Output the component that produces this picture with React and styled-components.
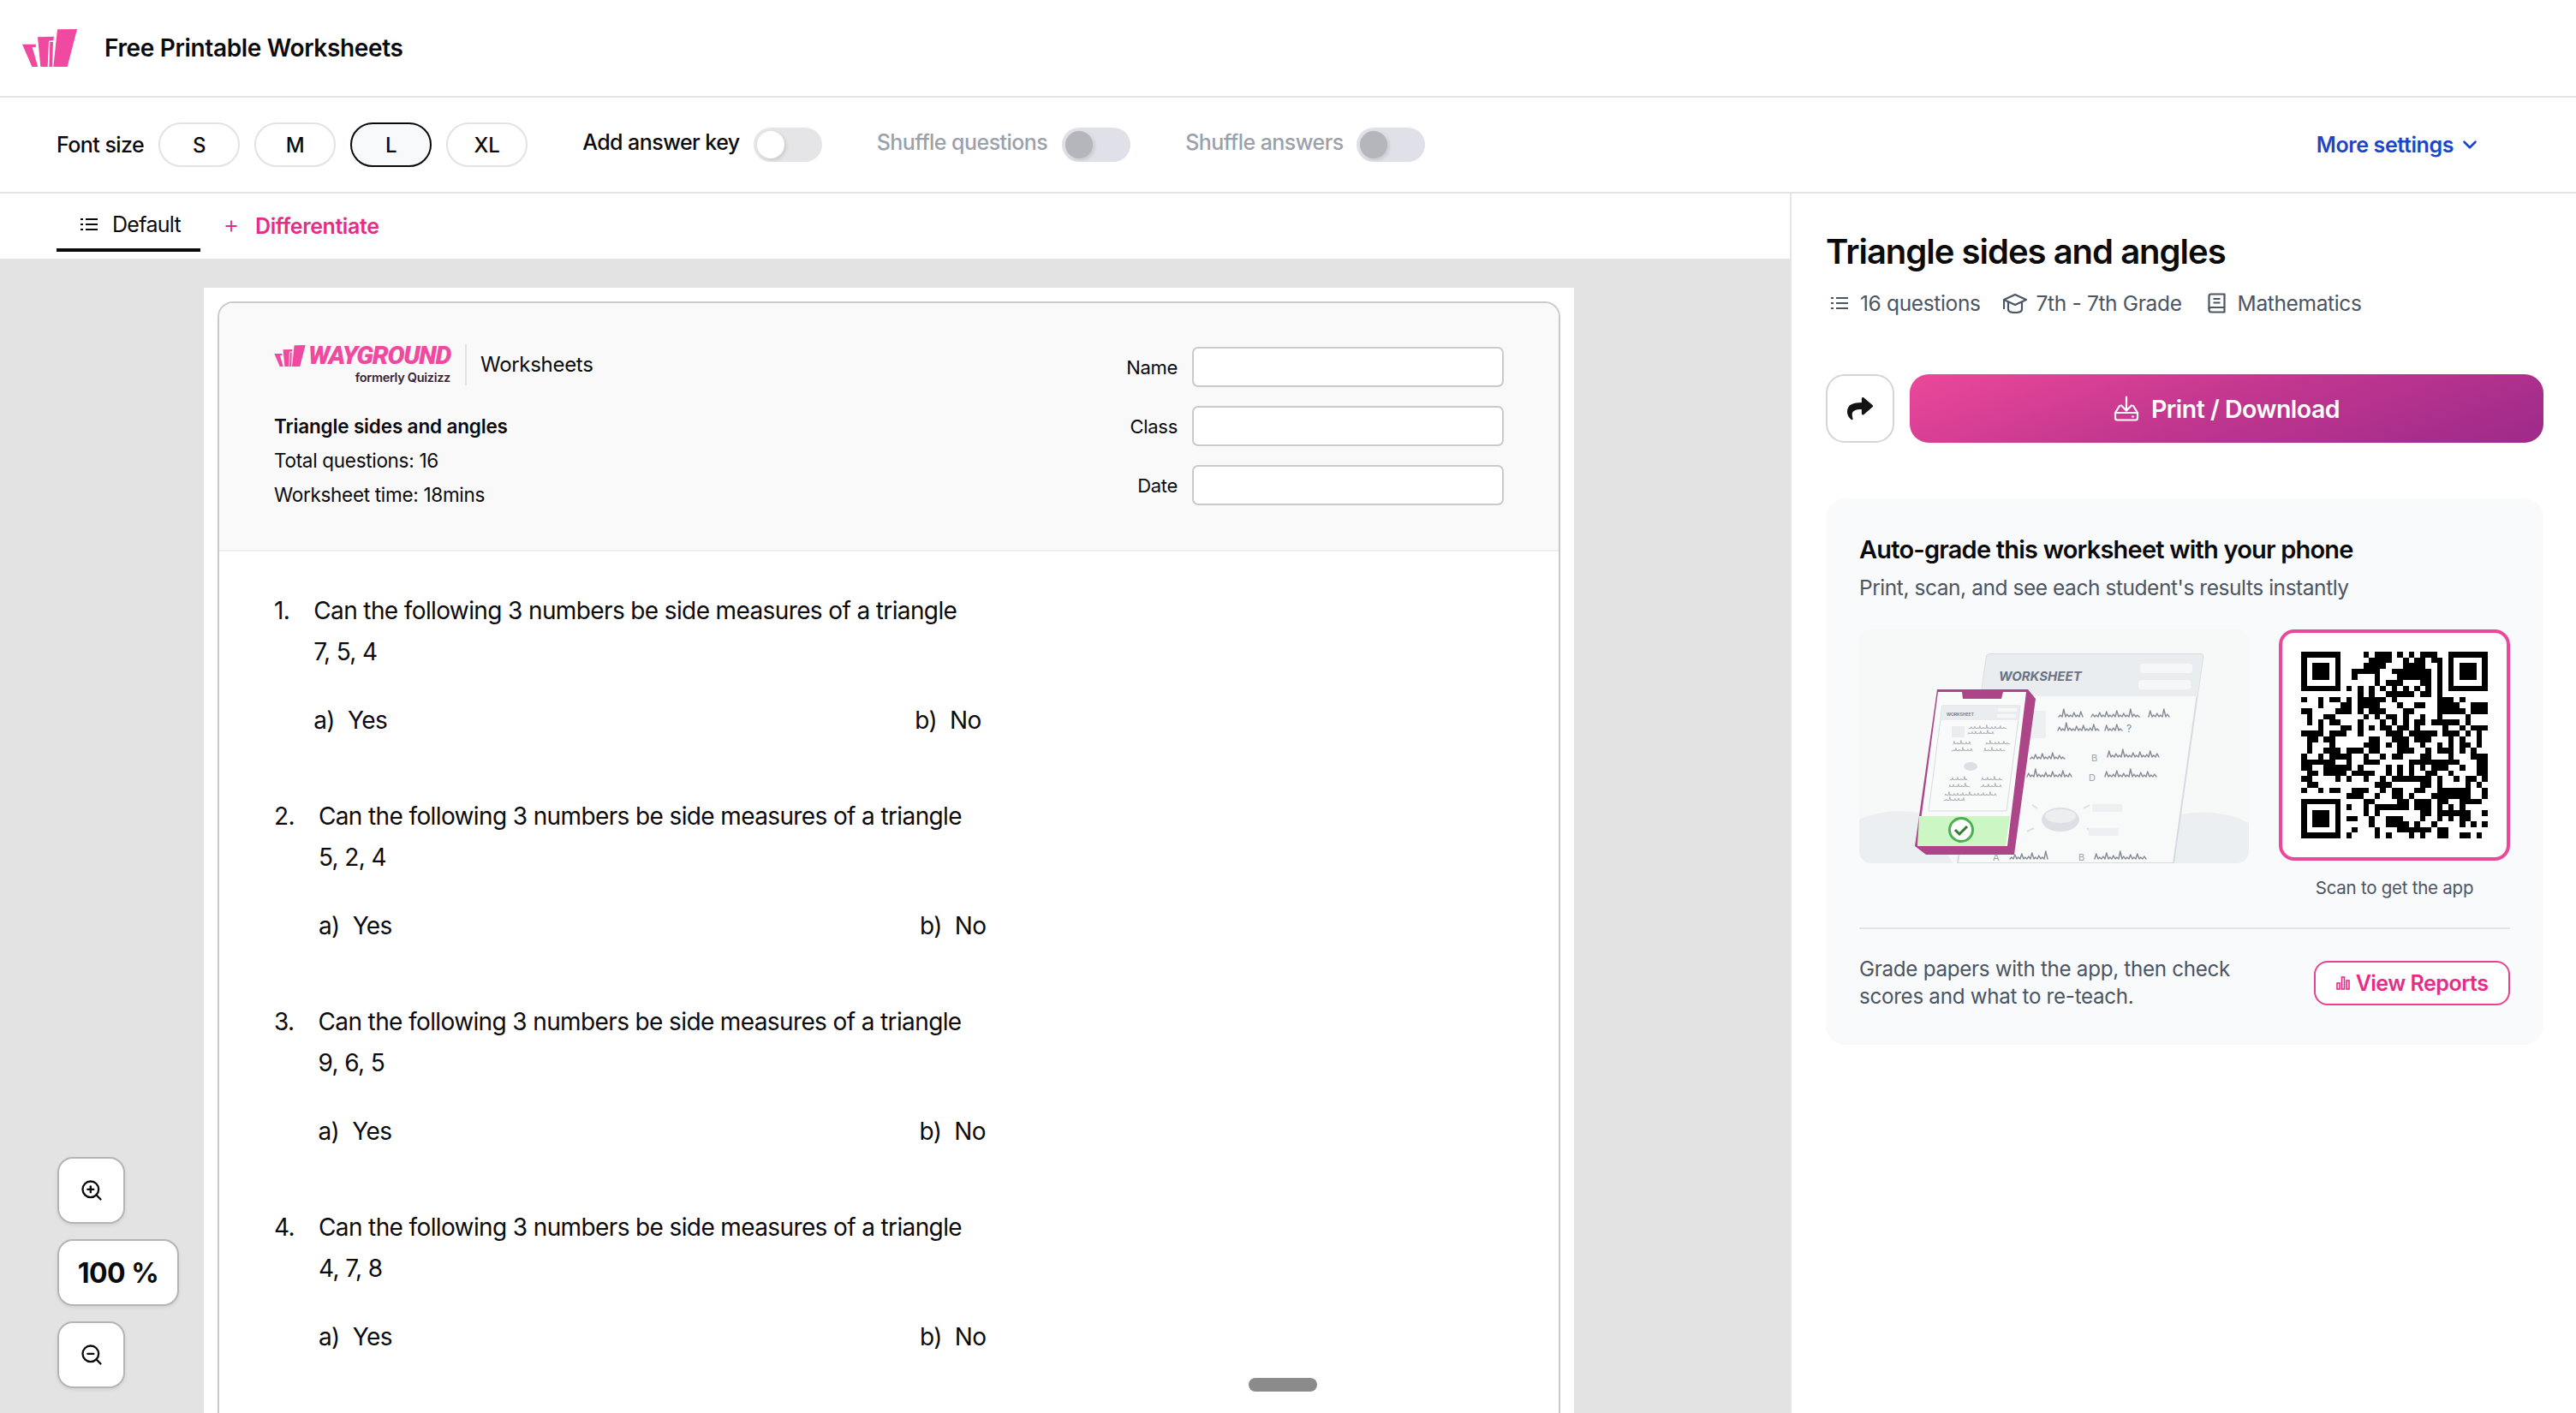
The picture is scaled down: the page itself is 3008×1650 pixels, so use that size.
import styled, { createGlobalStyle } from 'styled-components'
import { ChevronDown, Plus, ZoomIn, ZoomOut } from 'lucide-react'
import { FaShare } from 'react-icons/fa'

const GlobalStyle = createGlobalStyle`
  html, body {
    margin: 0;
    padding: 0;
    background: #fff;
  }
  * {
    box-sizing: border-box;
  }
  body {
    font-family: Inter, "Noto Sans", sans-serif;
    color: #0b0b0d;
  }
`

const Page = styled.div`
  width: 3008px;
  height: 1650px;
  overflow: hidden;
  display: flex;
  flex-direction: column;
  background: #fff;
`

const TopBar = styled.header`
  height: 114px;
  flex: none;
  display: flex;
  align-items: center;
  gap: 32px;
  padding-left: 26px;
  border-bottom: 2px solid #e2e2e8;
`

const TopTitle = styled.h1`
  margin: 0;
  font-size: 28px;
  font-weight: 600;
  letter-spacing: -0.35px;
`

const Toolbar = styled.div`
  height: 112px;
  flex: none;
  display: flex;
  align-items: center;
  padding: 0 111px 0 66px;
  border-bottom: 2px solid #e2e2e8;
`

const ToolLabel = styled.span`
  font-size: 25px;
  font-weight: 500;
  letter-spacing: -0.55px;
  margin-right: ${p => p.$gap || 17}px;
  margin-top: ${p => p.$lift ? -6 : 0}px;
  color: ${p => p.$muted ? '#9ca1a9' : '#0b0b0d'};
`

const SizeGroup = styled.div`
  display: flex;
  gap: 17px;
  margin-right: 64px;
`

const SizeButton = styled.button`
  width: 95px;
  height: 52px;
  border-radius: 26px;
  font: 500 24px Inter, sans-serif;
  color: #0b0b0d;
  background: ${p => p.$active ? '#f8f9fb' : '#fff'};
  border: 2px solid ${p => p.$active ? '#0b0b0d' : '#e2e2e8'};
`

const Toggle = styled.span`
  position: relative;
  width: 80px;
  height: 40px;
  flex: none;
  border-radius: 20px;
  margin-right: ${p => p.$gap || 64}px;
  background: ${p => p.$disabled ? '#e0e1e8' : '#e5e5e7'};

  &::after {
    content: '';
    position: absolute;
    left: 4px;
    top: 4px;
    width: 32px;
    height: 32px;
    border-radius: 50%;
    background: ${p => p.$disabled ? '#b4b6bb' : '#fff'};
    box-shadow: 2px 2px 4px rgba(0, 0, 0, 0.12);
  }
`

const MoreLink = styled.a`
  margin-left: auto;
  display: flex;
  align-items: center;
  gap: 6px;
  font-size: 25px;
  font-weight: 600;
  letter-spacing: -0.4px;
  color: #1d45c9;
`

const Body = styled.div`
  flex: 1;
  min-height: 0;
  display: flex;
`

const LeftPane = styled.main`
  width: 2090px;
  flex: none;
  display: flex;
  flex-direction: column;
`

const Tabs = styled.nav`
  height: 76px;
  flex: none;
  display: flex;
  padding-left: 66px;
`

const Tab = styled.div`
  width: 168px;
  height: 68px;
  display: flex;
  align-items: center;
  padding: 7px 0 0 28px;
  gap: 17px;
  font-size: 25px;
  letter-spacing: -0.7px;
  border-bottom: 4px solid #0b0b0d;
`

const TabAction = styled.div`
  display: flex;
  align-items: center;
  height: 76px;
  gap: 18px;
  margin-left: 26px;
  font-size: 25px;
  font-weight: 600;
  letter-spacing: -0.4px;
  color: #e52d87;
`

const Canvas = styled.div`
  position: relative;
  flex: 1;
  min-height: 0;
  overflow: hidden;
  padding: 34px 0 0 238px;
  background: #e3e3e4;
`

const Paper = styled.div`
  width: 1600px;
  height: 1400px;
  padding: 16px 16px 0;
  background: #fff;
`

const Sheet = styled.div`
  height: 100%;
  border: 2px solid #cacaca;
  border-bottom: 0;
  border-radius: 18px 18px 0 0;
`

const SheetHead = styled.div`
  height: 290px;
  display: flex;
  justify-content: space-between;
  padding: 48px 64px 0;
  background: #f9f9f9;
  border-bottom: 2px solid #eeeeee;
  border-radius: 16px 16px 0 0;
`

const Brand = styled.div`
  display: flex;
  align-items: center;
  height: 48px;
`

const BrandLogo = styled.div`
  width: 206px;
  display: flex;
  flex-direction: column;
  align-items: flex-end;
`

const BrandRow = styled.div`
  width: 100%;
  height: 26px;
  display: flex;
  align-items: flex-end;
  justify-content: space-between;

  svg {
    flex: none;
  }
`

const BrandName = styled.span`
  font-family: Roboto, sans-serif;
  font-size: 30px;
  font-weight: 900;
  font-style: italic;
  line-height: 26px;
  letter-spacing: -1.3px;
  white-space: nowrap;
  color: #ef4a9f;
`

const BrandNote = styled.span`
  margin-top: 4px;
  font-size: 14.5px;
  line-height: 18px;
  font-weight: 600;
  letter-spacing: -0.3px;
  color: #3a1f35;
`

const BrandKind = styled.span`
  margin-left: 17px;
  padding-left: 16px;
  height: 48px;
  line-height: 48px;
  border-left: 2px solid #e2e2e2;
  font-size: 24px;
  letter-spacing: -0.3px;
`

const SheetInfo = styled.div`
  margin-top: 28px;
  font-size: 22.5px;
  line-height: 40px;
  letter-spacing: -0.3px;
`

const InfoTitle = styled.div`
  font-weight: 600;
  letter-spacing: -0.15px;
`

const NameFields = styled.div`
  margin-top: 3px;
  display: flex;
  flex-direction: column;
  gap: 22px;
`

const FieldRow = styled.label`
  display: flex;
  align-items: center;
  justify-content: flex-end;
  gap: 17px;
  font-size: 22px;
  letter-spacing: -0.3px;
`

const FieldBox = styled.span`
  width: 364px;
  height: 47px;
  background: #fff;
  border: 2px solid #cacaca;
  border-radius: 7px;
`

const Questions = styled.div`
  padding: 45px 64px 0;
`

const Question = styled.section`
  margin-bottom: 64px;
  display: flex;
  gap: 28px;
  font-size: 28px;
  line-height: 48px;
  letter-spacing: -0.62px;
`

const QuestionBody = styled.div`
  flex: 1;
`

const Options = styled.div`
  margin-top: 32px;
  display: grid;
  grid-template-columns: 702px 700px;
`

const Option = styled.div`
  display: flex;
  gap: 15px;
`

const ZoomControls = styled.div`
  position: absolute;
  left: 67px;
  top: 1049px;
  display: flex;
  flex-direction: column;
  align-items: flex-start;
  gap: 18px;
`

const ZoomButton = styled.button`
  width: ${p => p.$wide ? 142 : 79}px;
  height: 78px;
  display: flex;
  align-items: center;
  justify-content: center;
  padding: 0;
  background: #fff;
  border: 2px solid #b5b5b5;
  border-radius: 18px;
  box-shadow: 0 2px 4px rgba(0, 0, 0, 0.08);
  font: 700 32px Inter, sans-serif;
  letter-spacing: -0.5px;
  color: #0b0b0d;
`

const ScrollHandle = styled.div`
  position: absolute;
  left: 1458px;
  top: 1307px;
  width: 80px;
  height: 16px;
  border-radius: 8px;
  background: #8b8b8b;
`

const RightPane = styled.aside`
  flex: 1;
  padding: 44px 38px 0 40px;
  border-left: 2px solid #e5e5ea;
`

const DocTitle = styled.h2`
  margin: 0;
  font-size: 40px;
  line-height: 48px;
  font-weight: 600;
  letter-spacing: -1px;
`

const MetaRow = styled.div`
  margin-top: 21px;
  height: 30px;
  display: flex;
  align-items: center;
  padding-left: 6px;
  font-size: 24.5px;
  letter-spacing: -0.35px;
  color: #4b5563;
`

const MetaItem = styled.span`
  display: flex;
  align-items: center;
  gap: ${p => p.$gap || 14}px;
  margin-right: ${p => p.$after || 25}px;
`

const Actions = styled.div`
  margin-top: 68px;
  display: flex;
  gap: 18px;
`

const ShareButton = styled.button`
  width: 80px;
  height: 80px;
  flex: none;
  display: flex;
  align-items: center;
  justify-content: center;
  padding: 0;
  background: #fff;
  border: 2px solid #d3d5da;
  border-radius: 22px;
  color: #111315;
`

const PrintButton = styled.button`
  flex: 1;
  display: flex;
  align-items: center;
  justify-content: center;
  gap: 14px;
  border: 0;
  border-radius: 22px;
  background: linear-gradient(160deg, #ec4899 0%, #c0368f 50%, #9d2a8a 100%);
  color: #fff;
  font: 600 28.5px Inter, sans-serif;
  letter-spacing: -0.5px;
`

const ScanCard = styled.section`
  margin-top: 65px;
  height: 638px;
  padding: 40px 39px 0;
  background: #f9fafc;
  border-radius: 22px;
`

const ScanTitle = styled.h3`
  margin: 0;
  font-size: 29px;
  line-height: 40px;
  font-weight: 600;
  letter-spacing: -0.8px;
`

const ScanSub = styled.p`
  margin: 8px 0 0;
  font-size: 24.5px;
  line-height: 32px;
  letter-spacing: -0.45px;
  color: #4b5563;
`

const ScanVisual = styled.div`
  margin-top: 33px;
  display: flex;
  justify-content: space-between;
`

const QrColumn = styled.div`
  width: 270px;
  display: flex;
  flex-direction: column;
  align-items: center;
`

const QrFrame = styled.div`
  width: 270px;
  height: 270px;
  display: flex;
  align-items: center;
  justify-content: center;
  background: #fff;
  border: 4px solid #ec4899;
  border-radius: 18px;
`

const QrCaption = styled.div`
  margin-top: 16px;
  font-size: 20.5px;
  line-height: 32px;
  letter-spacing: -0.25px;
  color: #4b5563;
`

const Divider = styled.hr`
  margin: 30px 0 0;
  border: 0;
  height: 2px;
  background: #e2e3eb;
`

const ScanFoot = styled.div`
  margin-top: 31px;
  display: flex;
  align-items: center;
  justify-content: space-between;
`

const FootText = styled.p`
  margin: 0;
  font-size: 24.2px;
  line-height: 32px;
  letter-spacing: -0.3px;
  color: #4b5563;
`

const ReportsButton = styled.button`
  width: 229px;
  height: 52px;
  display: flex;
  align-items: center;
  justify-content: center;
  gap: 7px;
  padding: 0;
  background: #fff;
  border: 2px solid #e8418f;
  border-radius: 16px;
  color: #e52d87;
  font: 600 25px Inter, sans-serif;
  letter-spacing: -0.5px;
`

const questions = [
  { n: 1, nums: '7, 5, 4' },
  { n: 2, nums: '5, 2, 4' },
  { n: 3, nums: '9, 6, 5' },
  { n: 4, nums: '4, 7, 8' },
]

const QR_ROWS = [
  '#######....#.###.#.#.###..#######',
  '#.....#.....####..#.##.##.#.....#',
  '#.###.#....####...####..#.#.###.#',
  '#.###.#..#####..#######.#.#.###.#',
  '#.###.#..#...#...######.#.#.###.#',
  '#.....#......#.###...##.#.#.....#',
  '#######.#.#.#.#.#.#.#.#.#.#######',
  '..........#.#..#####.##.#........',
  '#..#.##.#.#####.#.......###.#....',
  '...#...##.####...#..##..####..###',
  '##....###.#.###...##....#####.###',
  '.#..##.....#.#.##.#..#..#....#...',
  '.#.#.##...#...#.#.#.##.#####.#...',
  '...#...##.#.#.##.##.#....#..#.###',
  '####.###..#....###.#####.###.#.#.',
  '.##.##......##..###.###...#.#..#.',
  '.#...#.....###.#.##..#..#.#.##.#.',
  '.#..###.###.##...###..#.###.#.#..',
  '#..#.####..#..#.##...##...#...###',
  '######..#..###.....#########...##',
  '##..#####.#....#.#.#.#.###..#..##',
  '.##.####.####..#.#.#..##..#....##',
  '##....#.#..#..#.#######.#..#.##.#',
  '.##..........###.....##.#....#.#.',
  '#..#.##..###..#.##..##..######..#',
  '........###..#..##.#...#######..#',
  '#######....##....##.###.##..####.',
  '#.....#.#..#.######.###.#.#.#....',
  '#.###.#....#.#.......##.######..#',
  '#.###.#.##..#..###...#..#.#.##...',
  '#.###.#.....#..####.#..#....#.#.#',
  '#.....#..#...#...######.##.......',
  '#######.#....#.#...#.#..##..##.#.',
]

const LogoMark = ({ width, height }) => (
  <svg width={width} height={height} viewBox="78 102 192 132" fill="#ef4a9f">
    <path d="M201 103 L270 102 L236 234 L187 234 Z" />
    <path d="M132 130 L189 128 L187 142 L171 143 L167 234 L142 234 Z" />
    <path d="M175 147 L186 147 L183 234 L172 234 Z" />
    <path d="M78 155 L126 155 L125 165 L113 166 L133 234 L112 234 Z" />
  </svg>
)

const QrCode = () => (
  <svg width="218" height="218" viewBox="0 0 33 33" shapeRendering="crispEdges">
    {QR_ROWS.map((row, y) =>
      row.split('').map((c, x) =>
        c === '#' ? <rect key={`${x}-${y}`} x={x} y={y} width="1" height="1" fill="#000" /> : null
      )
    )}
  </svg>
)

const AMPS = [2, 3, 7, 2, 4, 2, 9, 3, 2, 5, 2, 6]

// spiky line standing in for handwriting in the illustration
const Scribble = ({ x, y, w, sw = 1.4 }) => {
  const size = sw < 1 ? 0.5 : 1
  const step = 4 * size
  let d = `M${x} ${y}`
  for (let i = 0; i < Math.floor(w / step); i++) {
    const a = AMPS[(i + Math.round(x)) % AMPS.length] * size
    d += ` l${step * 0.45} ${-a} l${step * 0.1} ${a * 0.2} l${step * 0.45} ${a * 0.8}`
  }
  return <path d={d} fill="none" stroke="#838a94" strokeWidth={sw} strokeLinejoin="round" strokeLinecap="round" />
}

const ScanArt = () => (
  <svg width="455" height="273" viewBox="0 0 455 273" style={{ borderRadius: 14, flex: 'none' }}>
    <rect width="455" height="273" fill="#f7f8f8" />
    <path d="M0 222 Q30 208 70 214 L110 273 L0 273 Z" fill="#eceff1" />
    <path d="M360 273 L375 216 Q420 208 455 226 L455 273 Z" fill="#eceff1" />
    <path d="M149 31 Q150 29 153 29 L398 29 Q402 29 401 33 L367 273 L115 273 Z" fill="#f8f9f9" stroke="#d6dbe0" strokeWidth="2" />
    <path d="M149 31 Q150 29 153 29 L398 29 Q402 29 401 33 L395 78 L142 78 Z" fill="#e9edf0" />
    <rect x="328" y="40" width="61" height="11" rx="3" fill="#f6f7f8" />
    <rect x="326" y="59" width="61" height="11" rx="3" fill="#f6f7f8" />
    <text x="163" y="60" fontFamily="Inter, sans-serif" fontSize="15" fontWeight="700" fontStyle="italic" fill="#6b7280">WORKSHEET</text>
    <rect x="200" y="95" width="18" height="32" rx="2" fill="#ecf0f2" />
    <Scribble x={233} y={102} w={28} />
    <Scribble x={271} y={102} w={56} />
    <Scribble x={338} y={102} w={24} />
    <Scribble x={232} y={118} w={48} />
    <Scribble x={287} y={118} w={20} />
    <text x="312" y="120" fontFamily="Inter, sans-serif" fontSize="12" fill="#838a94">?</text>
    <Scribble x={200} y={151} w={40} />
    <Scribble x={290} y={149} w={60} />
    <Scribble x={196} y={172} w={52} />
    <Scribble x={287} y={172} w={60} />
    <text x="271" y="154" fontFamily="Inter, sans-serif" fontSize="11" fill="#9ca3af">B</text>
    <text x="268" y="177" fontFamily="Inter, sans-serif" fontSize="11" fill="#9ca3af">D</text>
    <ellipse cx="235" cy="222" rx="22" ry="14" fill="#dcdfe3" />
    <ellipse cx="235" cy="218" rx="18" ry="8" fill="#eceef0" />
    <path d="M208 209l-6-4M262 209l7-4M204 232l-8 4M266 232l6 5" stroke="#dcdfe3" strokeWidth="2" />
    <rect x="272" y="204" width="35" height="9" rx="1" fill="#ecf0f2" />
    <rect x="268" y="232" width="35" height="9" rx="1" fill="#ecf0f2" />
    <text x="156" y="270" fontFamily="Inter, sans-serif" fontSize="11" fill="#9ca3af">A</text>
    <Scribble x={176} y={268} w={44} />
    <text x="256" y="270" fontFamily="Inter, sans-serif" fontSize="11" fill="#9ca3af">B</text>
    <Scribble x={275} y={268} w={60} />
    <path d="M91 70 L197 70 L206 81 L181 263 L78 263 L65 253 Z" fill="#ac4688" />
    <path d="M92 73 L120 73 L121 81 L166 81 L168 73 L195 73 L173 253 L68 253 Z" fill="#f9fafa" />
    <path d="M70 218 L176 218 L171 253 L68 253 Z" fill="#ccf7c4" />
    <circle cx="119" cy="234" r="13.5" fill="#fff" stroke="#4caf50" strokeWidth="3" />
    <path d="M112 234 L117 239 L126 230" fill="none" stroke="#2e7d32" strokeWidth="3" />
    <path d="M97 89 L188 89 L172 212 L81 212 Z" fill="#f9fafa" stroke="#d6dbe0" strokeWidth="1" />
    <path d="M97 89 L188 89 L186 106 L95 106 Z" fill="#e9edf0" />
    <text x="102" y="101" fontFamily="Inter, sans-serif" fontSize="5" fontWeight="600" fill="#6b7280">WORKSHEET</text>
    <rect x="162" y="92" width="22" height="4" rx="1" fill="#f6f7f8" />
    <rect x="161" y="99" width="22" height="4" rx="1" fill="#f6f7f8" />
    <rect x="108" y="113" width="15" height="13" fill="#e9edf0" />
    <Scribble x={128} y={116} w={45} sw={0.6} />
    <Scribble x={127} y={122} w={30} sw={0.6} />
    <Scribble x={110} y={134} w={20} sw={0.6} />
    <Scribble x={148} y={134} w={28} sw={0.6} />
    <Scribble x={108} y={142} w={25} sw={0.6} />
    <Scribble x={146} y={142} w={25} sw={0.6} />
    <ellipse cx="130" cy="160" rx="8" ry="5" fill="#dcdfe3" />
    <Scribble x={106} y={176} w={20} sw={0.6} />
    <Scribble x={143} y={176} w={25} sw={0.6} />
    <Scribble x={105} y={184} w={25} sw={0.6} />
    <Scribble x={142} y={184} w={25} sw={0.6} />
    <Scribble x={100} y={194} w={60} sw={0.6} />
    <Scribble x={99} y={200} w={25} sw={0.6} />
  </svg>
)

const ListIcon = ({ color }) => (
  <svg width="20" height="18" viewBox="0 0 20 18" fill="none" stroke={color} strokeWidth="2">
    <path d="M6 3h14M6 9h14M6 15h14" />
    <path d="M0 3h3M0 9h3M0 15h3" />
  </svg>
)

const CapIcon = () => (
  <svg width="28" height="24" viewBox="0 0 28 24" fill="none" stroke="#4b5563" strokeWidth="2.2" strokeLinejoin="round">
    <path d="M14 2 L27 8 L14 14 L1 8 Z" />
    <path d="M6 11 V19 Q6 23 14 23 Q22 23 22 19 V11" />
    <path d="M1 8 V19" />
  </svg>
)

const BookIcon = () => (
  <svg width="21" height="24" viewBox="0 0 21 24" fill="none" stroke="#4b5563" strokeWidth="2.2" strokeLinejoin="round">
    <path d="M4 1.5 H19.5 V22.5 H4 Q1.5 22.5 1.5 19.5 V4 Q1.5 1.5 4 1.5 Z" />
    <path d="M1.5 19 Q1.5 17 4 17 H19.5" />
    <path d="M6.5 7 H14.5 M6.5 11.5 H14.5" />
  </svg>
)

const TrayIcon = () => (
  <svg width="30" height="30" viewBox="0 0 30 30" fill="none" stroke="#fff" strokeWidth="2.2" strokeLinecap="round" strokeLinejoin="round">
    <path d="M15 1.5 V17 M9 11.5 L15 17.5 L21 11.5" />
    <path d="M7 12 L2 20 V26 Q2 28.5 4.5 28.5 H25.5 Q28 28.5 28 26 V20 L23 12" />
    <path d="M2 20 H28" />
    <path d="M22 24.5 H23" />
  </svg>
)

const BarsIcon = () => (
  <svg width="16" height="16" viewBox="0 0 16 16" fill="none" stroke="#e52d87" strokeWidth="1.6">
    <rect x="1" y="8" width="3" height="7" />
    <rect x="6.5" y="1" width="3" height="14" />
    <rect x="12" y="5" width="3" height="10" />
  </svg>
)

const App = () => {
  return (
    <Page>
      <GlobalStyle />
      <TopBar>
        <LogoMark width={64} height={44} />
        <TopTitle>Free Printable Worksheets</TopTitle>
      </TopBar>

      <Toolbar>
        <ToolLabel>Font size</ToolLabel>
        <SizeGroup>
          <SizeButton>S</SizeButton>
          <SizeButton>M</SizeButton>
          <SizeButton $active>L</SizeButton>
          <SizeButton>XL</SizeButton>
        </SizeGroup>
        <ToolLabel $lift $gap={16}>Add answer key</ToolLabel>
        <Toggle />
        <ToolLabel $lift $muted>Shuffle questions</ToolLabel>
        <Toggle $disabled />
        <ToolLabel $lift $muted $gap={15}>Shuffle answers</ToolLabel>
        <Toggle $disabled $gap={1} />
        <MoreLink>More settings <ChevronDown size={26} strokeWidth={2.4} /></MoreLink>
      </Toolbar>

      <Body>
        <LeftPane>
          <Tabs>
            <Tab><ListIcon color="#0b0b0d" />Default</Tab>
            <TabAction><Plus size={20} strokeWidth={2.2} />Differentiate</TabAction>
          </Tabs>
          <Canvas>
            <Paper>
              <Sheet>
                <SheetHead>
                  <div>
                    <Brand>
                      <BrandLogo>
                        <BrandRow>
                          <LogoMark width={37} height={25} />
                          <BrandName>WAYGROUND</BrandName>
                        </BrandRow>
                        <BrandNote>formerly Quizizz</BrandNote>
                      </BrandLogo>
                      <BrandKind>Worksheets</BrandKind>
                    </Brand>
                    <SheetInfo>
                      <InfoTitle>Triangle sides and angles</InfoTitle>
                      <div>Total questions: 16</div>
                      <div>Worksheet time: 18mins</div>
                    </SheetInfo>
                  </div>
                  <NameFields>
                    <FieldRow>Name <FieldBox /></FieldRow>
                    <FieldRow>Class <FieldBox /></FieldRow>
                    <FieldRow>Date <FieldBox /></FieldRow>
                  </NameFields>
                </SheetHead>
                <Questions>
                  {questions.map(q => (
                    <Question key={q.n}>
                      <span>{q.n}.</span>
                      <QuestionBody>
                        <div>Can the following 3 numbers be side measures of a triangle</div>
                        <div>{q.nums}</div>
                        <Options>
                          <Option><span>a)</span><span>Yes</span></Option>
                          <Option><span>b)</span><span>No</span></Option>
                        </Options>
                      </QuestionBody>
                    </Question>
                  ))}
                </Questions>
              </Sheet>
            </Paper>
            <ZoomControls>
              <ZoomButton><ZoomIn size={28} strokeWidth={2} /></ZoomButton>
              <ZoomButton $wide>100 %</ZoomButton>
              <ZoomButton><ZoomOut size={28} strokeWidth={2} /></ZoomButton>
            </ZoomControls>
            <ScrollHandle />
          </Canvas>
        </LeftPane>

        <RightPane>
          <DocTitle>Triangle sides and angles</DocTitle>
          <MetaRow>
            <MetaItem $after={26}><ListIcon color="#4b5563" />16 questions</MetaItem>
            <MetaItem $gap={11} $after={30}><CapIcon />7th - 7th Grade</MetaItem>
            <MetaItem><BookIcon />Mathematics</MetaItem>
          </MetaRow>
          <Actions>
            <ShareButton><FaShare size={30} /></ShareButton>
            <PrintButton><TrayIcon />Print / Download</PrintButton>
          </Actions>
          <ScanCard>
            <ScanTitle>Auto-grade this worksheet with your phone</ScanTitle>
            <ScanSub>Print, scan, and see each student's results instantly</ScanSub>
            <ScanVisual>
              <ScanArt />
              <QrColumn>
                <QrFrame><QrCode /></QrFrame>
                <QrCaption>Scan to get the app</QrCaption>
              </QrColumn>
            </ScanVisual>
            <Divider />
            <ScanFoot>
              <FootText>Grade papers with the app, then check<br />scores and what to re-teach.</FootText>
              <ReportsButton><BarsIcon />View Reports</ReportsButton>
            </ScanFoot>
          </ScanCard>
        </RightPane>
      </Body>
    </Page>
  )
}

export default App
